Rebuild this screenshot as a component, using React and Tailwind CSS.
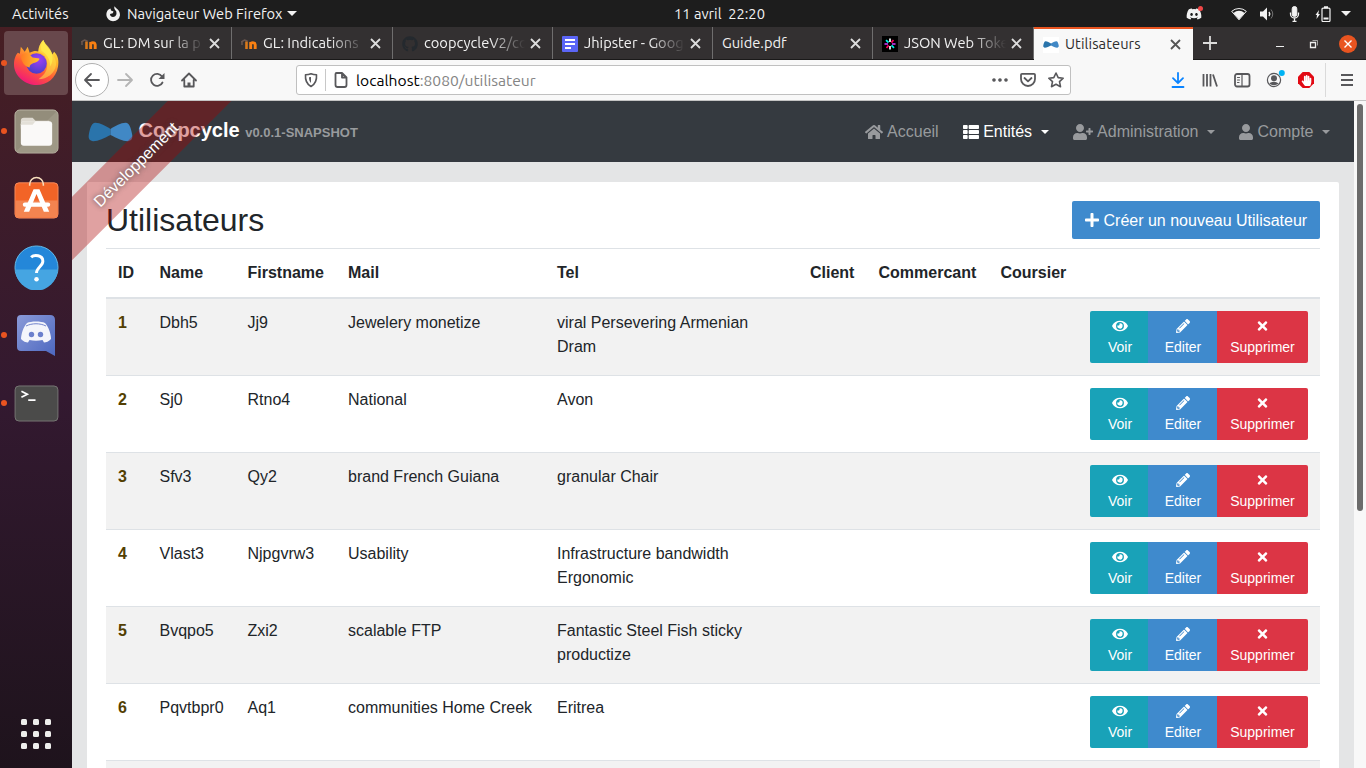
import React from "react";
import {
  FaUserPlus, FaUser, FaPlus, FaEye, FaPencilAlt, FaTimes, FaThList, FaHome, FaGithub, FaDiscord, FaHandPaper,
} from "react-icons/fa";

const CloseX = ({ className = "" }) => (
  <svg className={"h-[11px] w-[11px] shrink-0 " + className} viewBox="0 0 11 11" fill="none" stroke="currentColor" strokeWidth="1.8">
    <path d="M1 1l9 9M10 1l-9 9" />
  </svg>
);

const Triangle = ({ className = "" }) => (
  <svg className={"h-[5px] w-[10px] shrink-0 " + className} viewBox="0 0 10 5" fill="currentColor">
    <path d="M0 0h10L5 5z" />
  </svg>
);

const BowTie = ({ className }) => (
  <svg className={className} viewBox="0 0 46 20" preserveAspectRatio="none">
    <path d="M7 .8C12 .5 18 4 23 7v6C17 16 10 19.4 5 19.200.8 18.600.4 15.500.8 13 1.500 9 3 1 7 .8z" fill="#2a74ab" />
    <path d="M39 .8C34 .5 28 4 23 7v6c6 3 13 6.400 18 6.200 4.200-.6 4.600-3.700 4.200-6.200C44.500 9 43 1 39 .8z" fill="#4188c5" />
  </svg>
);

const Moodle = () => (
  <svg className="h-4 w-4" viewBox="0 0 16 16" fill="none">
    <path d="M0 6l3.500-2 3 1M1 6v3" stroke="#6b5750" strokeWidth="1.500" />
    <path d="M5.500 5.500V13" stroke="#d97a1c" strokeWidth="2.600" />
    <path d="M9.700 13V6M9.700 8.500q.2-1.900 2.200-1.900t2.300 2.200V13" stroke="#f98012" strokeWidth="2.900" />
  </svg>
);

const DocIcon = () => (
  <svg className="h-4 w-4" viewBox="0 0 16 16">
    <rect width="16" height="16" rx="1" fill="#5b65f5" />
    <path d="M3 4h10M3 8h10M3 12h6" stroke="#fff" strokeWidth="1.800" />
  </svg>
);

const JwtIcon = () => (
  <svg className="h-4 w-4" viewBox="0 0 16 16" strokeWidth="1.700">
    <rect width="16" height="16" fill="#000" />
    <path d="M8 2.500V6M8 10v3.500" stroke="#fff" />
    <path d="M11.500 4L9.400 6.600M6.600 9.400L4.500 12" stroke="#fb015b" />
    <path d="M13.500 8H10M6 8H2.500" stroke="#d63aff" />
    <path d="M12 11.800L9.500 9.400M6.500 6.500L4 4.200" stroke="#00f2e6" />
  </svg>
);

const TABS = [
  { w: "w-[160px]", label: "GL: DM sur la p", icon: <Moodle />, fade: true },
  { w: "w-[161px]", label: "GL: Indications", icon: <Moodle />, fade: true },
  { w: "w-[160px]", label: "coopcycleV2/co", icon: <FaGithub className="h-4 w-4 text-[#24292e]" />, fade: true },
  { w: "w-[160px]", label: "Jhipster - Goog", icon: <DocIcon />, fade: true },
  { w: "w-[160px]", label: "Guide.pdf", icon: null },
  { w: "w-[161px]", label: "JSON Web Toke", icon: <JwtIcon />, fade: true },
];

function TopBar() {
  return (
    <div className="flex h-[27px] shrink-0 items-center bg-[#1d1d1d] text-[14.67px] text-[#f2f2f2]">
      <div className="w-[93px] pt-px pl-3">Activités</div>
      <div className="flex w-[581px] items-center pl-3">
        <svg className="mr-[6px] h-[16px] w-[16px]" viewBox="0 0 16 16" fill="none">
          <path d="M3.500 3.500Q.8 6 1.500 10q1.500 5 6.500 5.300 6-.3 7-6Q15 4.500 11 2L9.500.3Q8.800 2 9.800 3.500 12 5 11.500 8q-.8 3-3.500 3-3-.3-3-3l2.800-.8.7-1.700L6 4.500 5.500 2.500z" fill="#f2f2f2" />
        </svg>
        <span className="pt-px whitespace-nowrap">Navigateur Web Firefox</span>
        <Triangle className="ml-[5px]" />
      </div>
      <div className="w-[512px] whitespace-pre">11 avril  22:20</div>
      <div className="flex flex-1 items-center">
        <div className="relative h-4 w-[17px]">
          <FaDiscord className="h-[16px] w-[16px]" />
          <span className="absolute top-0 right-0 h-[5px] w-[5px] rounded-full bg-[#f04747]" />
        </div>
        <svg className="ml-7 h-[14px] w-4" viewBox="0 0 16 14"><path d="M.7 4.300a11 11 0 0114.600 0L8 12.800z" fill="none" stroke="#f2f2f2" /><path d="M2.500 6a8 8 0 0111 0L8 12.500z" fill="#f2f2f2" /></svg>
        <svg className="ml-3 h-4 w-4" viewBox="0 0 16 16" fill="none" stroke="#f2f2f2"><path d="M1 5.500h3l4-4v13l-4-4H1z" fill="#f2f2f2" stroke="none" /><path d="M10 6q1.500 2 0 4" strokeWidth="1.500" /><path d="M12 3.500q3.500 4.500 0 9" opacity=".4" /></svg>
        <svg className="ml-[14px] h-4 w-[11px]" viewBox="0 0 11 16" fill="none" stroke="#f2f2f2"><rect x="3.200" y=".5" width="4.600" height="10" rx="2.300" fill="#f2f2f2" /><path d="M1.500 6.500V8a4 4 0 008 0V6.500M5.500 12v3M3.500 15.500h4" strokeWidth="1.300" /></svg>
        <svg className="ml-[15px] h-[16px] w-[16px]" viewBox="0 0 16 16" fill="none" stroke="#f2f2f2"><path d="M4 4L.5 9H2l-.5 4L5 8H3.300z" fill="#f2f2f2" stroke="none" /><rect x="7" y="2.200" width="8" height="13.300" rx="1" strokeWidth="1.200" /><path d="M9 1.200h4M8.500 12.500h5" strokeWidth="2" /></svg>
        <Triangle className="ml-[10px]" />
      </div>
    </div>
  );
}

function DockItem({ children, running, active }) {
  return (
    <div className="mb-1 flex h-16 w-full items-center">
      <div className="flex w-1 justify-center pl-[4px]">
        {running && <span className="z-10 h-[6px] w-[6px] shrink-0 rounded-full bg-[#e95420]" />}
      </div>
      <div className={"flex h-16 w-16 items-center justify-center rounded-[4px] " + (active ? "bg-[#68484c]" : "")}>{children}</div>
    </div>
  );
}

function Dock() {
  return (
    <div className="flex w-[72px] shrink-0 flex-col bg-linear-to-b from-[#471e23] via-[#331930] to-[#1e131c] pt-1">
      <DockItem running active>
        <svg className="mb-[2px] h-[47px] w-[47px]" viewBox="0 0 48 48">
          <defs>
            <linearGradient id="ff" x1=".85" y1="0" x2=".3" y2="1">
              <stop offset="0" stopColor="#fff44f" /><stop offset=".35" stopColor="#ffb62b" /><stop offset=".65" stopColor="#ff5a36" /><stop offset="1" stopColor="#f0157d" />
            </linearGradient>
            <radialGradient id="ffg" cx=".6" cy=".3" r=".7"><stop offset="0" stopColor="#a03ff5" /><stop offset="1" stopColor="#4a3ec9" /></radialGradient>
            <linearGradient id="fft" x1="0" y1="0" x2="1" y2="0"><stop offset="0" stopColor="#ff7a24" /><stop offset="1" stopColor="#ffc12e" /></linearGradient>
          </defs>
          <path d="M1 26c0-6 2-10 4-12l2 1 1-7 4 5 3-5 2 6c4-2 7-2 9-1 0-6 3-10 5-12 1 4 5 7 8 12l1 3 2-3c4 4 5 9 4 15-2 12-11 19-22 19S1 38 1 26z" fill="url(#ff)" />
          <circle cx="24" cy="25" r="10.500" fill="url(#ffg)" />
          <path d="M8 18c1-3 5-4 8-3l4 4 7 1c0 3-4 4-7 5-2 1-3 2-3 4-5-1-8-5-9-11z" fill="url(#fft)" />
          <path d="M25 13c7 1 10 7 10 13 0 8-5 12-9 15 9 0 17-6 18-15 0-7-4-11-6-14-3-4-6-7-7-11-3 3-5 7-5 11z" fill="#ffe14a" opacity=".55" />
          <path d="M31 1c2 5 8 8 9 15 1 5 0 9-2 12 0-8-4-13-9-16-1-4 0-8 2-11z" fill="#fff04e" opacity=".7" />
        </svg>
      </DockItem>
      <DockItem running>
        <svg className="h-[45px] w-[45px]" viewBox="0 0 46 46">
          <rect x="1" y="1" width="44" height="44" rx="5" fill="#938d7b" stroke="#bab5a5" />
          <path d="M1.500 44L44 2v38q0 4-4 4z" fill="#a39d8c" opacity=".7" />
          <path d="M7 12q0-3 3-3h9l3 3h14v8H7z" fill="#dedad1" />
          <rect x="7" y="12.500" width="32" height="25" rx="3" fill="#faf9f8" /><path d="M7 17q0-1 1-1h11l3-3.500H10q-3 0-3 3z" fill="#e3e0d8" />
        </svg>
      </DockItem>
      <DockItem>
        <svg className="mb-[4px] h-[47px] w-[45px]" viewBox="0 0 46 48">
          <rect x="1" y="9" width="44" height="36" rx="4" fill="#f26427" stroke="#f68a5c" />
          <path d="M1.500 27h43v14q0 3.500-3.500 3.500H5q-3.500 0-3.500-3.500z" fill="#f38450" />
          <path d="M16 12V10.500a7 7 0 0114 0V12" fill="none" stroke="#f8dfbd" strokeWidth="1.600" />
          <path d="M20 15.500h6l10 23h-5.500l-7.500-18-7.500 18H10z" fill="#fff" /><rect x="9" y="29" width="28" height="4.500" rx="2.200" fill="#fff" />
        </svg>
      </DockItem>
      <DockItem>
        <svg className="h-[45px] w-[45px]" viewBox="0 0 46 46">
          <circle cx="23" cy="23" r="22" fill="#2487d9" stroke="#63bbea" />
          <path d="M1.500 25h43a21.500 21.500 0 01-43 0z" fill="#45a5e2" />
          <path d="M17.500 12.500c3-3 12-2.500 12 4 0 5-6.500 6.500-6.500 12" fill="none" stroke="#fff" strokeWidth="3" /><circle cx="23" cy="35" r="2.300" fill="#fff" />
        </svg>
      </DockItem>
      <DockItem running>
        <svg className="h-[42px] w-[40px]" viewBox="0 0 40 42">
          <defs><linearGradient id="dc" x1="0" y1="0" x2="1" y2="1"><stop offset="0" stopColor="#8a9ad8" /><stop offset="1" stopColor="#4d68c0" /></linearGradient></defs>
          <path d="M5 1h29q5 0 5 5v36l-9-5H5q-4 0-4-4V5q0-4 4-4z" fill="url(#dc)" />
          <path d="M11 9c4-2 14-2 18 0 4 4 6 12 6 16-2 2.500-5 3.500-7 3.500L26.500 26c-4 1-9 1-13 0L12 28.500c-2 0-5-1-7-3.500 0-4 2-12 6-16z" fill="#f4f5fb" />
          <path d="M10 12c6-3 14-3 20 0" fill="none" stroke="#7284cd" /><circle cx="15.500" cy="20.500" r="2.700" fill="#6c80cd" /><circle cx="24.500" cy="20.500" r="2.700" fill="#6c80cd" />
        </svg>
      </DockItem>
      <DockItem running>
        <svg className="h-[37px] w-[45px]" viewBox="0 0 46 38">
          <rect x="1" y="1" width="44" height="36" rx="4" fill="#4b4b4a" stroke="#777674" />
          <path d="M7.500 6.500l6 3-6 3M14.500 15.500H22" fill="none" stroke="#fff" strokeWidth="1.800" />
        </svg>
      </DockItem>
      <div className="mt-auto mb-[19px] grid grid-cols-3 gap-[6px] self-center">
        {Array.from({ length: 9 }, (_, i) => <span key={i} className="h-[6px] w-[6px] rounded-[1.5px] bg-[#eeeeec]" />)}
      </div>
    </div>
  );
}

function TabBar() {
  return (
    <div className="flex h-[33px] shrink-0 border-b border-[#1a1919] bg-[#333031] text-[14.67px] text-[#f2f2f2]">
      {TABS.map((t) => (
        <div key={t.label} className={"flex shrink-0 items-center border-r border-[#6f6e6e] pt-px pr-[11.5px] pl-[9px] " + t.w}>
          {t.icon && <span className="mr-[6px] flex shrink-0">{t.icon}</span>}
          <span className={"-mt-px min-w-0 flex-1 overflow-hidden whitespace-nowrap" + (t.fade ? " [mask-image:linear-gradient(to_right,#000_65%,transparent)]" : "")}>{t.label}</span>
          <CloseX className="ml-[5px] text-[#dcdcdc]" />
        </div>
      ))}
      <div className="-mb-px flex w-[159px] shrink-0 items-center border-t-2 border-[#e95420] bg-[#f8f8f8] pr-3 pl-[9px] text-[#2d2d2d]">
        <span className="mr-[6px] flex h-4 w-4 items-center bg-white"><BowTie className="h-[7px] w-4" /></span>
        <span className="-mt-px flex-1 tracking-[0.08px]">Utilisateurs</span>
        <CloseX className="text-[#555]" />
      </div>
      <svg className="mt-[9px] ml-[10px] h-[14px] w-[14px]" viewBox="0 0 14 14" stroke="#dcdcdc" strokeWidth="1.800"><path d="M7 0v14M0 7h14" /></svg>
      <div className="ml-auto flex items-center pr-[9px] pt-[2px] text-[#eee]">
        <span className="mt-[4px] mr-[26px] h-px w-2 bg-[#eee]" />
        <svg className="mr-[21px] h-2 w-2 overflow-visible" viewBox="0 0 8 8" fill="none" stroke="#eee"><path d="M2.500 .5h5v5" opacity=".6" /><path d="M.5 2.500h5v5h-5z" strokeWidth="1.300" /></svg>
        <span className="flex h-[18px] w-[18px] items-center justify-center rounded-full bg-[#e95420]">
          <svg className="h-2 w-2" viewBox="0 0 8 8" stroke="#fff" strokeWidth="1.400"><path d="M.5.5l7 7M7.500.5l-7 7" /></svg>
        </span>
      </div>
    </div>
  );
}

const Tool = ({ children, w = "w-8", color = "text-[#58585b]" }) => (
  <span className={"flex shrink-0 items-center justify-center " + w + " " + color}>
    <svg className="h-4 w-4 overflow-visible" viewBox="0 0 16 16" fill="none" stroke="currentColor" strokeWidth="1.800" strokeLinecap="round" strokeLinejoin="round">{children}</svg>
  </span>
);

function Toolbar() {
  return (
    <div className="flex h-[41px] shrink-0 items-center border-b border-[#c4c4c4] bg-[#f8f8f8] pl-[3px]">
      <span className="flex h-[34px] w-[34px] items-center justify-center rounded-full border border-[#b0b0b0] bg-white">
        <Tool w="w-4"><path d="M15 8H1.500M7 2L1 8l6 6" /></Tool>
      </span>
      <Tool color="text-[#b5b5b5]"><path d="M1 8h13.500M9 2l6 6-6 6" /></Tool>
      <Tool><path d="M13.500 10.500A6 6 0 1113 4.500" /><path d="M15.500 1v6h-6z" fill="currentColor" stroke="none" /></Tool>
      <Tool><path d="M1 8.500L8 1.500l7 7M3.300 8v6.500h9.400V8" /><path d="M8 14v-3.500" strokeWidth="3" strokeLinecap="butt" /></Tool>
      <div className="ml-[91px] flex h-[30px] w-[775px] items-center rounded-[3px] border border-[#c0c0c0] bg-white">
        <Tool w="w-7"><path d="M8 1.700c2 .8 4 1 5.500 1C14 9 11.500 12.500 8 14.500 4.500 12.500 2 9 2.500 2.700c1.500 0 3.500-.2 5.500-1z" strokeWidth="1.600" /><path d="M8 5v6C6.500 9.500 6 8 6 5.300z" fill="currentColor" stroke="none" /></Tool>
        <span className="h-[22px] w-px bg-[#c8c8c8]" />
        <Tool w="w-[29px]"><path d="M3.500 1H9l4.500 4.500V13q0 2-2 2h-7q-2 0-2-2V2q0-1 1-1zM9 1v4.500h4.500" strokeWidth="1.800" /></Tool>
        <span className="ml-px flex-1 pt-px text-[15.65px] text-black">localhost<span className="text-[#848484]">:8080/utilisateur</span></span>
        <Tool w="w-7"><circle cx="2" cy="8" r="1.200" fill="currentColor" strokeWidth="1.200" /><circle cx="8" cy="8" r="1.200" fill="currentColor" strokeWidth="1.200" /><circle cx="14" cy="8" r="1.200" fill="currentColor" strokeWidth="1.200" /></Tool>
        <Tool w="w-7"><path d="M2 1.800h12q1 0 1 1V7a7 7 0 01-14 0V2.800q0-1 1-1zM4.500 6L8 9.300 11.500 6" /></Tool>
        <Tool w="w-7"><path d="M8 1l2.200 4.600 5 .6-3.700 3.500 1 5L8 12.200l-4.500 2.500 1-5L.8 6.200l5-.6z" strokeWidth="1.600" /></Tool>
      </div>
      <div className="ml-auto flex items-center pr-[3px]">
        <Tool color="text-[#0a84ff]"><path d="M8 1v10M3 6.200l5 5 5-5M2.500 15h11" /></Tool>
        <Tool><path d="M1.500 2v12.500M5 2v12.500M8.500 2v12.500M11 2.500l4 12" strokeLinecap="butt" /></Tool>
        <Tool><rect x="1" y="2" width="14.500" height="12.500" rx="2" /><path d="M8 2v12M3.500 5.500H5.500M3.500 8H5.500M3.500 10.500H5" strokeWidth="1.200" /></Tool>
        <Tool><circle cx="8" cy="8" r="6.600" strokeWidth="1.200" /><circle cx="8" cy="6.300" r="3" fill="currentColor" stroke="none" /><path d="M3.300 11.500Q8 8 12.700 11.500 8 15 3.300 11.500z" fill="currentColor" stroke="none" /><circle cx="15.800" cy="1" r="3" fill="#00b3f4" stroke="none" /></Tool>
        <span className="relative flex w-8 items-center justify-center">
          <svg className="h-4 w-4" viewBox="0 0 16 16"><path d="M4.700 0h6.600L16 4.700v6.600L11.300 16H4.700L0 11.300V4.700z" fill="#e20a14" /></svg>
          <FaHandPaper className="absolute h-[11px] w-[11px] text-white" />
        </span>
        <span className="mr-[5px] ml-[3px] h-[34px] w-px bg-[#dadada]" />
        <Tool><path d="M2 3h12M2 8h12M2 13h12" strokeLinecap="butt" /></Tool>
      </div>
    </div>
  );
}

const NavItem = ({ icon, label, caret = true, active }) => (
  <div className={"flex items-center " + (active ? "text-white" : "text-[#989a9d]")}>
    {icon}
    <span className="ml-[4.500px]">{label}</span>
    {caret && <svg className="ml-[8.500px] h-1 w-2" viewBox="0 0 8 4" fill="currentColor"><path d="M0 0h8L4 4z" /></svg>}
  </div>
);

const COLS = "grid grid-cols-[41.5px_88px_100.5px_209px_253px_68.500px_122px_89.500px_242px]";
const HEADERS = ["ID", "Name", "Firstname", "Mail", "Tel", "Client", "Commercant", "Coursier", ""];
const ROWS = [
  ["1", "Dbh5", "Jj9", "Jewelery monetize", "viral Persevering Armenian Dram"],
  ["2", "Sj0", "Rtno4", "National", "Avon"],
  ["3", "Sfv3", "Qy2", "brand French Guiana", "granular Chair"],
  ["4", "Vlast3", "Njpgvrw3", "Usability", "Infrastructure bandwidth Ergonomic"],
  ["5", "Bvqpo5", "Zxi2", "scalable FTP", "Fantastic Steel Fish sticky productize"],
  ["6", "Pqvtbpr0", "Aq1", "communities Home Creek", "Eritrea"],
];

const RowButton = ({ className, icon, label }) => (
  <div className={"flex flex-col items-center pt-[5px] text-[14px] leading-[21px] text-white " + className}>
    <span className="flex h-[21px] items-center pb-[2px]">{icon}</span>
    <span>{label}</span>
  </div>
);

function Page() {
  return (
    <div className="relative flex min-h-0 flex-1 overflow-hidden bg-[#e4e5e6] font-['Liberation_Sans',Arial,sans-serif] text-[16px] leading-6 text-[#212529]">
      <div className="flex w-[1282px] shrink-0 flex-col">
        <nav className="flex h-[61px] shrink-0 items-center justify-between bg-[#353a40] pr-6 pl-4">
          <div className="flex items-center">
            <BowTie className="h-[20px] w-[45px]" />
            <span className="-mt-[3px] ml-[5.5px] text-[20px] font-bold text-white">Coopcycle</span>
            <span className="mt-[3px] ml-[5.5px] text-[13px] font-bold text-[#989a9d]">v0.0.1-SNAPSHOT</span>
          </div>
          <div className="flex items-center gap-6">
            <NavItem icon={<FaHome className="h-4 w-[18px]" />} label="Accueil" caret={false} />
            <NavItem icon={<FaThList className="h-4 w-4" />} label="Entités" active />
            <NavItem icon={<FaUserPlus className="h-4 w-5" />} label="Administration" />
            <NavItem icon={<FaUser className="h-4 w-[14px]" />} label="Compte" />
          </div>
        </nav>
        <div className="mt-5 mr-[15px] ml-[15px] h-[640px] shrink-0 rounded-[2px] bg-white px-[19px] pt-[19px]">
          <div className="flex h-[38px] items-center justify-between">
            <h2 className="text-[32px] leading-[38px]">Utilisateurs</h2>
            <div className="flex h-[38px] w-[248px] items-center rounded-[2px] bg-[#3f8acd] pl-[13px] whitespace-nowrap text-white">
              <FaPlus className="h-4 w-[14px]" /><span className="mt-px ml-[4.500px]">Créer un nouveau Utilisateur</span>
            </div>
          </div>
          <div className={COLS + " mt-[9px] h-[51px] border-t border-b-2 border-t-[#dee2e6] border-b-[#dee2e6] font-bold"}>
            {HEADERS.map((h, i) => <div key={i} className="py-3 pl-3">{h}</div>)}
          </div>
          {ROWS.map((r, i) => (
            <div key={r[0]} className={COLS + " h-[77px] border-b border-[#dee2e6] " + (i % 2 ? "bg-white" : "bg-[#f2f2f2]")}>
              {r.map((c, j) => <div key={j} className={"py-3 pl-3 " + (j === 0 ? "font-bold text-[#533f03]" : j === 4 ? "pr-8" : "")}>{c}</div>)}
              <div className="col-start-9 flex h-[64px] pt-3 pl-3">
                <RowButton className="w-[58px] rounded-l-[2px] bg-[#19a2b8] pl-[2px]" icon={<FaEye className="h-[14px] w-4" />} label="Voir" />
                <RowButton className="w-[69px] bg-[#3f8acd] pl-px" icon={<FaPencilAlt className="h-[14px] w-[14px]" />} label="Editer" />
                <RowButton className="w-[91px] rounded-r-[2px] bg-[#dc3545]" icon={<FaTimes className="h-[14px] w-[11px]" />} label="Supprimer" />
              </div>
            </div>
          ))}
          <div className="h-10 bg-[#f2f2f2]" />
        </div>
      </div>
      <div className="w-3 shrink-0 bg-[#f8f8f8] pt-[3px] pl-[3px]"><div className="h-[407px] w-[6px] rounded-full bg-[#6b6b6b]" /></div>
      <div className="absolute top-[41px] left-[-56px] h-[45px] w-[240px] -rotate-45 bg-[#aa0000]/37 text-center leading-[45px] whitespace-nowrap text-white [text-shadow:0_0_5px_#444]">
        Développement
      </div>
    </div>
  );
}

export default function App() {
  return (
    <div className="flex h-[768px] w-[1366px] flex-col overflow-hidden font-['Ubuntu','Noto_Sans',sans-serif]">
      <TopBar />
      <div className="flex min-h-0 flex-1">
        <Dock />
        <div className="flex w-[1294px] flex-col">
          <TabBar />
          <Toolbar />
          <Page />
        </div>
      </div>
    </div>
  );
}
